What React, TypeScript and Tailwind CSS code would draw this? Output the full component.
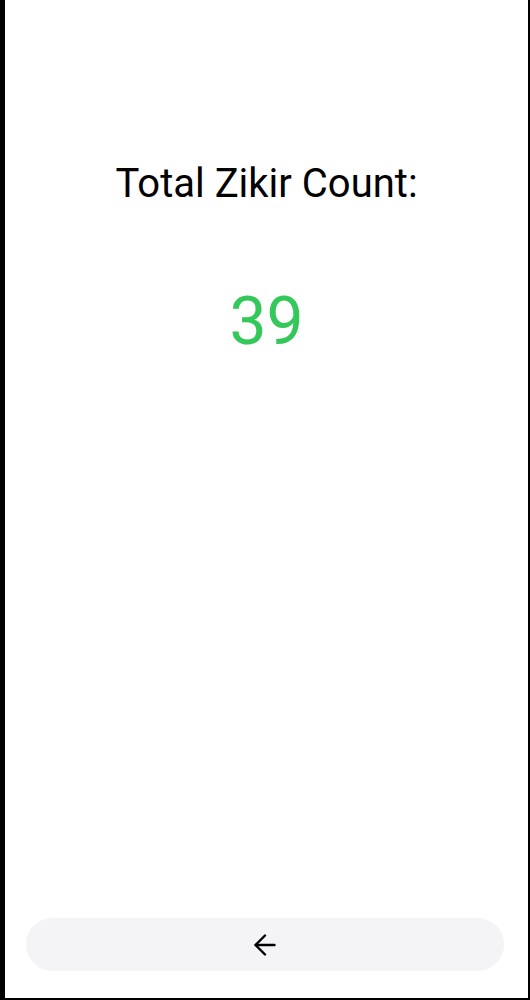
import React from "react";

export default function App() {
  return (
    <div className="w-[530px] h-[1000px] bg-black pl-[5px] pr-[2px] pb-[2px]" style={{ fontFamily: "Roboto, sans-serif" }}>
      <div className="h-full bg-white flex flex-col items-center">
        <div className="pt-[160px] text-[40px] leading-[48px] text-black">Total Zikir Count:</div>
        <div className="mt-[76px] text-[66px] leading-[76px] text-[#34c759]">39</div>
        <div className="flex-1" />
        <div className="w-full pl-[21px] pr-[24px] pb-[27px]">
          <button className="w-full h-[53px] rounded-full bg-[#f4f3f6] flex items-center justify-center">
            <svg width="22" height="22" viewBox="0 0 22 22" fill="none" stroke="black" strokeWidth="2.4" strokeLinecap="round" strokeLinejoin="round">
              <path d="M20.5 11H1.8" />
              <path d="M11 1.5L1.5 11L11 20.5" />
            </svg>
          </button>
        </div>
      </div>
    </div>
  );
}
